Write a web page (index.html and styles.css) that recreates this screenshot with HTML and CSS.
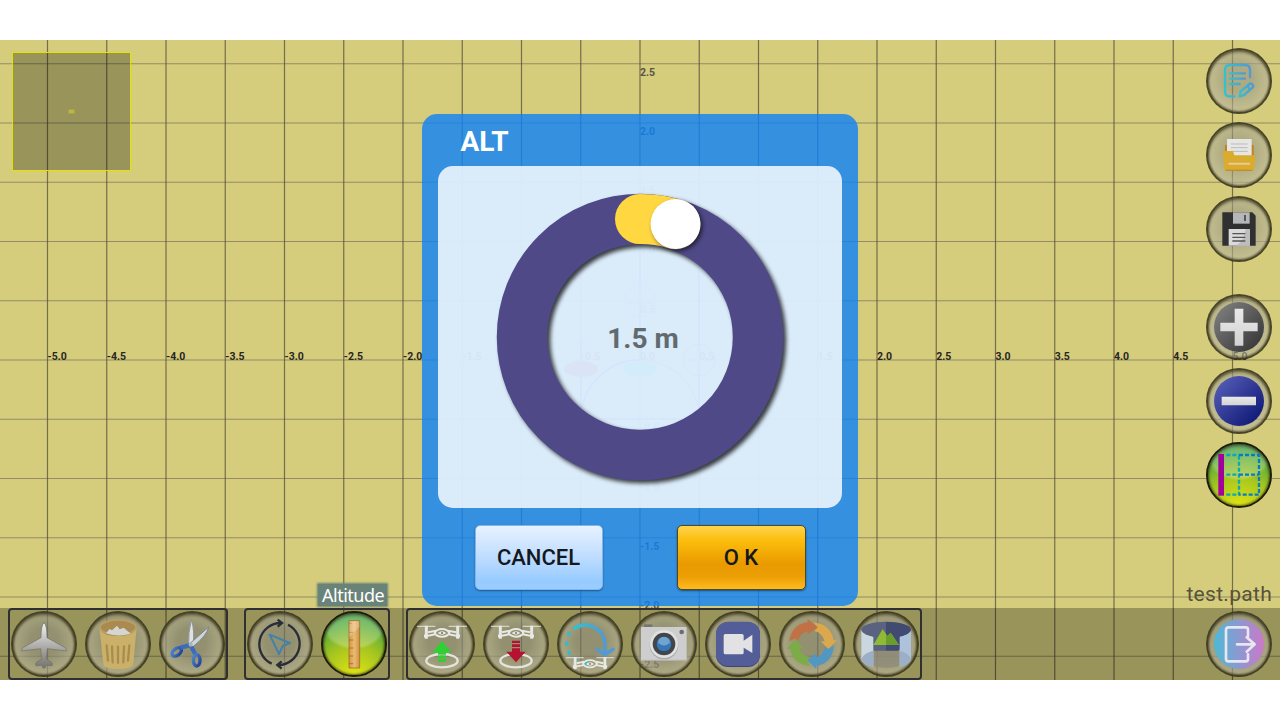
FILE: index.html
```html
<!DOCTYPE html>
<html lang="en">
<head>
<meta charset="utf-8">
<title>Flight path editor</title>
<link rel="stylesheet" href="styles.css">
</head>
<body>
<svg class="defs" width="0" height="0" aria-hidden="true">
  <defs>
    <linearGradient id="steel" x1="0" y1="0" x2="0" y2="1"><stop offset="0" stop-color="#f4f4f4"/><stop offset=".55" stop-color="#aaa9a8"/><stop offset="1" stop-color="#74736c"/></linearGradient>
    <linearGradient id="white" x1="0" y1="0" x2="0" y2="1"><stop offset="0" stop-color="#e9e9e9"/><stop offset="1" stop-color="#d2d2d2"/></linearGradient>
    <linearGradient id="cyan" x1="0" y1="0" x2="1" y2="0"><stop offset="0" stop-color="#35c0cf"/><stop offset="1" stop-color="#5399d3"/></linearGradient>
    <linearGradient id="exit" x1="0" y1="0" x2="1" y2="0"><stop offset="0" stop-color="#4cb9d6"/><stop offset="1" stop-color="#cc78ca"/></linearGradient>
    <linearGradient id="gray" x1="0" y1="0" x2="1" y2="1"><stop offset="0" stop-color="#858585"/><stop offset="1" stop-color="#303030"/></linearGradient>
    <linearGradient id="blue" x1="0" y1="0" x2="1" y2="1"><stop offset="0" stop-color="#5a64bc"/><stop offset="1" stop-color="#06106e"/></linearGradient>
    <linearGradient id="wood" x1="0" y1="0" x2="1" y2="0"><stop offset="0" stop-color="#d99640"/><stop offset=".5" stop-color="#eabb72"/><stop offset="1" stop-color="#cf9140"/></linearGradient>
    <linearGradient id="handle" x1="0" y1="0" x2="1" y2="1"><stop offset="0" stop-color="#4f86cd"/><stop offset="1" stop-color="#203f96"/></linearGradient>
    <g id="drone" fill="none" stroke="#e8e8e4">
      <path d="M-75-53H-20M20-53H75" stroke-width="4" opacity=".75"/>
      <path d="M-47-55V-16M47-55V-16" stroke-width="9"/>
      <path d="M-54-24H-42M42-24H54" stroke-width="9"/>
      <path d="M-42-35-18-40M42-35 18-40M-42-25-20-29M42-25 20-29" stroke-width="6"/>
      <path d="M-22-33Q-16-45 0-45T22-33Q16-22 0-22T-22-33Z" stroke-width="6"/>
      <path d="M-13-33Q0-44 13-33 0-22-13-33Z" fill="#e8e8e4" stroke="none"/>
      <circle cy="-33" r="3" fill="#77745e" stroke="none"/>
    </g>
  </defs>
</svg>

<main class="stage">
  <svg class="canvas" viewBox="0 40 1280 640" width="1280" height="640">
    <g id="lines"></g>
    <g class="path-shapes">
      <path d="M640 247V360M699 250V419H581V340"/>
      <path d="M581 419A59 59 0 0 1 640 360"/>
      <path class="arc-end" d="M640 360A59 59 0 0 1 699 419"/>
      <g class="node"><circle cx="640" cy="301" r="16"/><path d="M640 287V314M627 303H653"/></g>
      <g class="node dark"><circle cx="699" cy="360" r="16"/><path d="M687 360H711M699 348V372"/></g>
      <ellipse class="red" cx="581" cy="369" rx="17" ry="8"/>
      <ellipse class="green" cx="640" cy="369" rx="17" ry="8"/>
    </g>
    <g id="labels"></g>
  </svg>

  <div class="upper">
    <div class="minimap"><span class="viewport"></span></div>
    <nav class="side">
      <div class="side-group">
        <button class="btn" aria-label="Edit"><svg viewBox="-99 -99 198 198"><g fill="none" stroke="url(#cyan)" stroke-width="7" stroke-linecap="round" stroke-linejoin="round"><path d="M33-11V-33Q33-48 18-48H-27Q-42-48-42-33V32Q-42 46-27 46H-14"/><path d="M-27-23.100H18V-23M-27-7.100H18V-7M-27 8.900H2V9"/><path d="M2 47 5 31 31 9Q36 5 41 11T38 22L15 42ZM25 16 34 26"/></g></svg></button>
        <button class="btn" aria-label="Open"><svg viewBox="-99 -99 198 198"><path d="M-42-30H44V10H-42Z" fill="#c68024"/><path d="M-36-48H38V10H-36Z" fill="#e6e6e4"/><path d="M-24-33H26M-24-22H26M-24-11H26" stroke="#b9bbbb" stroke-width="3"/><path d="M-49-12H-18L-14 1H50L45 43Q44 48 38 48H-37Q-43 48-44 43Z" fill="#d9ac2e"/><path d="M-29 26H31" stroke="#ecc797" stroke-width="6" stroke-linecap="round"/><path d="M-40 46H40" stroke="#c58b26" stroke-width="4"/></svg></button>
        <button class="btn" aria-label="Save"><svg viewBox="-99 -99 198 198"><path d="M-50-50H40L50-40V50H-50Z" fill="#303030"/><path d="M-18-50H32V-16H-18Z" fill="#b5b6b7"/><path d="M18-42V-24" stroke="#444" stroke-width="5"/><path d="M-31 0H33V50H-31Z" fill="#dadada"/><path d="M33 0V50H-8Q15 35 20 0Z" fill="#bdbdbd"/><path d="M-20 14H19M-20 25H19M-20 36H19" stroke="#555" stroke-width="4"/></svg></button>
      </div>
      <div class="side-group">
        <button class="btn" aria-label="Zoom in"><svg viewBox="-99 -99 198 198"><circle r="75" fill="url(#gray)"/><path d="M-13-55H13V-13H56V13H13V56H-13V13H-56V-13H-13Z" fill="url(#white)"/></svg></button>
        <button class="btn" aria-label="Zoom out"><svg viewBox="-99 -99 198 198"><circle r="75" fill="url(#blue)"/><path d="M-52-13H51V13H-52Z" fill="url(#white)"/></svg></button>
        <button class="btn active" aria-label="Grid"><svg viewBox="-99 -99 198 198"><path d="M-62-63H-45V62H-62Z" fill="#a1009c"/><g fill="none" stroke-width="7" stroke-dasharray="12 6"><path d="M-38-60H0M-38-1H0M-38 59H0M0-58V60" stroke="#08aab8"/><path d="M0-60H60V59H0M0-1H60" stroke="#087bc7"/></g></svg></button>
      </div>
    </nav>
  </div>
  <div class="captions"><span class="tip">Altitude</span><span class="filename">test.path</span></div>

  <footer class="bar">
    <div class="group">
      <button class="btn" aria-label="Plane"><svg viewBox="-99 -99 198 198"><path d="M0-64Q9-56 9-19L60 9Q70 14 67 21L10 14Q9 34 6 44L24 56Q28 62 23 66L7 63 3 72H-3L-7 63-23 66Q-28 62-24 56L-6 44Q-9 34-10 14L-67 21Q-70 14-60 9L-9-19Q-9-56 0-64Z" fill="url(#steel)" stroke="#716f60" stroke-width="2"/></svg></button>
      <button class="btn" aria-label="Delete"><svg viewBox="-99 -99 198 198"><ellipse cy="-50" rx="54" ry="22" fill="#a98a50"/><path d="M-56-50Q-50-24 0-24T56-50L46 60Q43 75 0 75T-44 60Z" fill="#cbb06a"/><ellipse cy="-50" rx="54" ry="22" fill="#a98a50" stroke="#bd9f61" stroke-width="5"/><path d="M-36-32-25-45-18-41-3-55 5-44 17-49 38-31Q0-20-36-32Z" fill="#d6d6d1"/><path d="M-34 4-30 50M-18 7-16 55M0 8V56M18 7 16 55M34 4 30 50" stroke="#a98d4d" stroke-width="7" stroke-linecap="round"/></svg></button>
      <button class="btn" aria-label="Cut"><svg viewBox="-99 -99 198 198"><path d="M-2-73Q9-40 3 8L-10 7Q-12-35-2-73Z" fill="#dfe2e2" stroke="#8d9498" stroke-width="3"/><path d="M50-51Q46-26 2 9L-8 0Z" fill="#cfd4d6" stroke="#7b858c" stroke-width="3"/><g fill="none" stroke="url(#handle)" stroke-width="10"><ellipse cx="-46" cy="24" rx="16" ry="10" transform="rotate(-38 -46 24)"/><path d="M-35 11-8 4M-2 8 10 31" stroke="#3d6cb8" stroke-width="13"/><ellipse cx="14" cy="49" rx="10" ry="17"/></g><circle cx="-4" cy="1" r="6" fill="#a7b5c3"/></svg></button>
    </div>
    <div class="group">
      <button class="btn" aria-label="Rotate"><svg viewBox="-99 -99 198 198"><g fill="none" stroke="#2b2d36" stroke-width="7"><path d="M-25 59A64 64 0 0 1 3-63"/><path d="M24-58A64 64 0 0 1-4 63"/><path d="M-7-73 6-63-7-52M5 52-8 63 5 74"/></g><path d="M-31-28 30-3 8 6-3 30Z" fill="none" stroke="#4181ab" stroke-width="6" stroke-linejoin="round"/></svg></button>
      <button class="btn active" aria-label="Altitude"><svg viewBox="-99 -99 198 198"><path d="M-15-70H17V72H-15Z" fill="url(#wood)" stroke="#966327" stroke-width="2"/><path d="M-15-62H-7M-15-35H-2M-15-12H-2M-15 12H-2M-15 36H-2M-15 59H-2" stroke="#8a6030" stroke-width="2"/><path d="M-14-69H16V-52L-14-20Z" fill="#fff" opacity=".25"/></svg></button>
    </div>
    <div class="group">
      <button class="btn" aria-label="Take off"><svg viewBox="-99 -99 198 198"><use href="#drone"/><ellipse cy="50" rx="47" ry="20" fill="none" stroke="#e4e4df" stroke-width="7"/><path d="M0-10 29 26H12V32H-12V26H-29ZM-12 35H12V43H-12ZM-12 46H12V54H-12Z" fill="#30cf34"/></svg></button>
      <button class="btn" aria-label="Land"><svg viewBox="-99 -99 198 198"><use href="#drone"/><ellipse cy="50" rx="47" ry="20" fill="none" stroke="#e4e4df" stroke-width="7"/><path d="M0 55-29 23H-12V13H12V23H29ZM-12-10H12V-3H-12ZM-12 1H12V9H-12Z" fill="#b4122e"/></svg></button>
      <button class="btn" aria-label="Return"><svg viewBox="-99 -99 198 198"><g fill="none" stroke-width="11" stroke-linecap="round"><path d="M-46-47A59 59 0 0 1 45 0V31" stroke="url(#cyan)"/><path d="M21 16 45 32 69 16" stroke="#5399d3"/><path d="M-63-31-64-28M-70-3V1M-63 25-62 28M-45 46-43 49M-12 57H-8" stroke="#39bac9"/></g><use href="#drone" transform="translate(0 91) scale(.95)"/></svg></button>
      <button class="btn" aria-label="Photo"><svg viewBox="-99 -99 198 198"><path d="M-60-51V-59H-35V-51Z" fill="#77756e"/><rect x="-69" y="-51" width="137" height="102" rx="3" fill="#cecece"/><path d="M-67 49H67" stroke="#aaa" stroke-width="3"/><circle r="43" cy="3" fill="#aaa"/><circle r="42" fill="#e1e1df"/><circle r="34" fill="#42464a"/><circle r="22" fill="#3577b8"/><path d="M-18-4A18 18 0 0 1 18-4Q0 13-18-4Z" fill="#72a2cf"/><circle cx="53" cy="-36" r="7" fill="#6d6d6d"/></svg></button>
      <button class="btn" aria-label="Video"><svg viewBox="-99 -99 198 198"><rect x="-66" y="-65" width="132" height="134" rx="36" fill="#3e4475"/><rect x="-66" y="-67" width="132" height="133" rx="36" fill="#535d97"/><path d="M-38-30H12Q17-30 17-25V-10L43-28V27L17 11V26Q17 31 12 31H-38Q-43 31-43 26V-25Q-43-30-38-30Z" fill="#e2e2e4"/></svg></button>
      <button class="btn" aria-label="Repeat"><svg viewBox="-99 -99 198 198"><path d="M-68-8Q-61-58-13-65V-75L17-50-13-29V-38Q-36-33-41-10L-50-17Z" fill="#c27045"/><path d="M3-65Q56-60 65-11H75L49 15 26-8H38Q31-34 7-39L17-50Z" fill="#dba84d"/><path d="M66 4Q60 60 13 65V76L-14 48 13 28V39Q34 35 39 8L49 15Z" fill="#5296c2"/><path d="M-7 65Q-57 61-65 14H-75L-50-14-27 13H-38Q-33 35-6 40L-14 48Z" fill="#7cab48"/></svg></button>
      <button class="btn" aria-label="Panorama"><svg viewBox="-99 -99 198 198"><ellipse cy="45" rx="67" ry="26" fill="#8e8b7b" opacity=".8"/><path d="M-74-43H0V20H-38Z" fill="#59637f"/><path d="M0-43H75L38 20H0Z" fill="#414a70"/><path d="M-74-42Q-62-26-38-22V68Q-66 63-74 48Z" fill="#cbd7df"/><path d="M75-42Q65-26 41-22V68Q68 63 75 48Z" fill="#afc2db"/><path d="M-74 44Q-65 26-38 20V68Q-66 63-74 48ZM75 44Q66 26 41 20V68Q68 63 75 48Z" fill="#9bafc7"/><path d="M-74-43A74 24 0 0 1 0-67V-19A74 24 0 0 1-74-43Z" fill="#59637f"/><path d="M75-43A74 24 0 0 0 0-67V-19A74 24 0 0 0 75-43Z" fill="#414a70"/><path d="M-38 3-10-45 4-24 14-34 39 3Z" fill="#90b934"/><path d="M0-28 4-24 14-34 39 3H0Z" fill="#6b9d2b"/></svg></button>
    </div>
    <button class="btn exit" aria-label="Exit"><svg viewBox="-99 -99 198 198"><circle r="75" fill="url(#exit)"/><path d="M27-23V-43Q27-50 20-50H-31Q-39-50-39-42V44Q-39 52-31 52H20Q27 52 27 45V31M-6 1H46M23-20 47 1 23 23" fill="none" stroke="#e8e6ef" stroke-width="8" stroke-linejoin="round" stroke-linecap="round"/></svg></button>
  </footer>

  <section class="dialog">
    <h1 class="title">ALT</h1>
    <div class="panel">
      <svg class="dial" viewBox="438 166 405 342" width="405" height="342">
        <circle class="track" cx="640" cy="337" r="118"/>
        <path class="value" d="M640 219A118 118 0 0 1 675.500 224.300"/>
        <circle class="knob" cx="675.500" cy="224" r="25"/>
        <text class="reading" x="643" y="348">1.5 m</text>
      </svg>
    </div>
    <div class="actions">
      <button class="action cancel">CANCEL</button>
      <button class="action ok">O K</button>
    </div>
  </section>
</main>
<script src="grid.js"></script>
</body>
</html>
```
FILE: styles.css
```css
* { box-sizing: border-box; }
body { margin: 0; background: #fff; font-family: Roboto, sans-serif; overflow: hidden; }
button { padding: 0; border: 0; font: inherit; }
.defs { position: absolute; }

.stage {
  position: relative;
  display: flex;
  flex-direction: column;
  width: 1280px;
  height: 640px;
  margin: 40px 0;
  background: #d5cd7c;
  overflow: hidden;
}

/* map canvas */
.canvas { position: absolute; inset: 0; }
.line-v { stroke: rgba(52, 46, 42, .6); stroke-width: 1.2; }
.line-h { stroke: rgba(82, 76, 82, .5); stroke-width: 1.2; }
.label { font: 700 10.500px Roboto, sans-serif; fill: #282622; }
.label-y { fill: #57534a; }
.path-shapes path { fill: none; stroke: #2020ff; stroke-width: 1.5; }
.path-shapes .arc-end { stroke: #e04070; }
.node circle { fill: none; stroke: #20d8ff; }
.path-shapes .node path { stroke: #8090b0; }
.node.dark circle { stroke: #505a90; }
.red { fill: #e01830; }
.green { fill: #10e060; }

.upper { position: relative; display: flex; justify-content: space-between; align-items: flex-start; height: 540px; }
.minimap {
  display: grid;
  place-items: center;
  width: 119px;
  height: 119px;
  margin: 12px 0 0 12px;
  border: 1px solid #e6e200;
  background: rgba(0, 0, 0, .28);
}
.viewport { width: 7px; height: 5px; border: 1px solid #aaa339; background: #b9b455; }

.side { display: flex; flex-direction: column; gap: 32px; padding: 8px 8px 0 0; }
.side-group { display: flex; flex-direction: column; gap: 8px; }

.captions { position: relative; display: flex; justify-content: space-between; align-items: center; height: 28px; padding: 0 8px 0 318px; }
.tip {
  height: 22px;
  padding: 0 3px 0 4px;
  margin-top: 1px;
  background: #6a8378;
  box-shadow: 0 0 2px 1px #6a8378;
  color: #fff;
  font: 18px/22px "Noto Sans", sans-serif;
  letter-spacing: -.5px;
}
.filename { color: #57533a; font-size: 21px; letter-spacing: .3px; }

/* round tool buttons */
.btn {
  flex: none;
  width: 66px;
  height: 66px;
  border-radius: 50%;
  border: 2px solid rgba(43, 39, 14, .8);
  background: radial-gradient(circle at 50% 46%, rgba(142, 141, 132, .55) 0 30%, rgba(184, 181, 158, .62) 68%, rgba(196, 192, 160, .7) 92%);
  box-shadow: inset 0 0 2px 1px rgba(50, 45, 20, .65), inset 0 3px 3px rgba(70, 64, 38, .4);
}
.btn svg { display: block; width: 66px; height: 66px; margin: -2px; }
.btn.active {
  border-color: #1c1d0b;
  background:
    radial-gradient(ellipse 50% 35% at 50% 24%, rgba(255, 255, 255, .25) 0 85%, transparent 100%),
    radial-gradient(circle at 50% 105%, #e6e712 0, #a6c520 45%, #2e9e42 90%);
}

/* bottom toolbar */
.bar { position: relative; display: flex; gap: 16px; height: 72px; padding-left: 8px; padding-right: 8px; background: rgba(0, 0, 0, .28); }
.group { display: flex; gap: 8px; padding: 1px; border: 2px solid #302f32; border-radius: 4px; }
.exit { margin: 3px 0 0 auto; }

/* altitude dialog */
.dialog {
  position: absolute;
  left: 422px;
  top: 73.500px;
  width: 435.500px;
  height: 492px;
  padding: 0 15.500px;
  border-radius: 15px;
  background: rgba(13, 130, 249, .8);
}
.title { height: 52.500px; margin: 0; padding-left: 23px; color: #fff; font-size: 28px; font-weight: 700; line-height: 55px; }
.panel { height: 342px; border-radius: 15px; background: rgba(255, 255, 255, .82); }
.dial { display: block; overflow: visible; }
.track { fill: none; stroke: #4f4987; stroke-width: 50.500; filter: drop-shadow(3px 3px 2px rgba(0, 0, 0, .75)); }
.value { fill: none; stroke: #ffd740; stroke-width: 50; stroke-linecap: round; }
.knob { fill: #fff; filter: drop-shadow(2px 2px 2px rgba(0, 0, 0, .6)); }
.reading { fill: #616a6e; font-size: 28px; font-weight: 700; text-anchor: middle; }
.actions { display: flex; justify-content: space-between; padding: 17px 36.500px 0 37px; }
.action { width: 128px; height: 65px; border-radius: 5px; color: #14181d; font-size: 22px; font-weight: 500; }
.cancel { border: 1px solid #83b5e5; background: linear-gradient(#e7f2ff, #bedcff 50%, #97cbff 88%, #9bcdff); box-shadow: 0 1px 2px rgba(20, 60, 110, .7); }
.ok { width: 129px; border: 1px solid #4c4a24; background: linear-gradient(#ffd34c, #fbbd0b 24%, #e99a00 60%, #eb9f05 80%, #ffba1f); box-shadow: 0 1px 2px rgba(20, 30, 50, .6); }
```
FILE: grid.js
```js
const NS = 'http://www.w3.org/2000/svg';
const STEP = 59.25;
const CX = 640;
const CY = 360;
const lines = document.getElementById('lines');
const labels = document.getElementById('labels');

function add(parent, tag, attrs, text) {
  const node = document.createElementNS(NS, tag);
  for (const key in attrs) node.setAttribute(key, attrs[key]);
  if (text) node.textContent = text;
  parent.appendChild(node);
}

for (let i = -10; i <= 10; i++) {
  const x = CX + i * STEP;
  add(lines, 'line', { class: 'line-v', x1: x, x2: x, y1: 40, y2: 680 });
  add(labels, 'text', { class: 'label', x: x, y: 360 }, (i / 2).toFixed(1));
}
for (let i = -5; i <= 5; i++) {
  const y = CY - i * STEP;
  add(lines, 'line', { class: 'line-h', x1: 0, x2: 1280, y1: y, y2: y });
  if (i) add(labels, 'text', { class: 'label label-y', x: CX, y: y + 12 }, (i / 2).toFixed(1));
}
```
